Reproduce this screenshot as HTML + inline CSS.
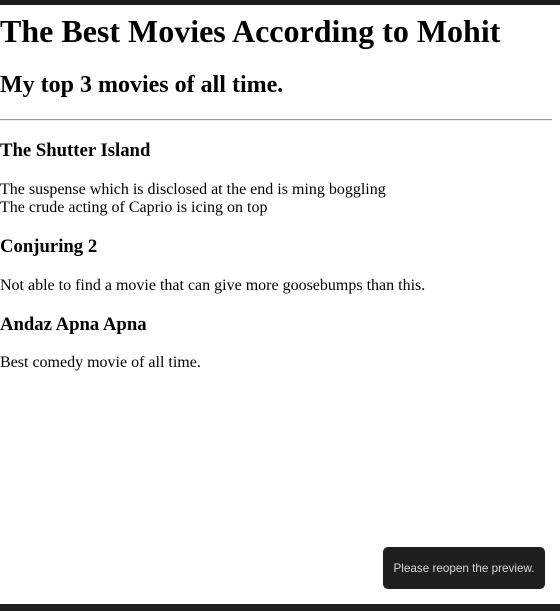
<!DOCTYPE html>
<html><head><meta charset="utf-8"><style>
html,body{margin:0;padding:0;background:#fff;}
body{width:552px;height:611px;overflow:hidden;position:relative;font-family:"Liberation Serif",serif;color:#000;padding-top:5px;box-sizing:border-box;}
.top{position:absolute;left:0;top:0;width:560px;height:5px;background:#1e1e1e;}
.bot{position:absolute;left:0;top:604px;width:560px;height:7px;background:#1e1e1e;}
h1{font-size:32px;margin:8px 0 0;line-height:normal;}
h2{font-size:24px;margin:21.9px 0 19.9px;line-height:normal;}
h3{font-size:18.72px;margin:19.2px 0 18.7px;line-height:normal;}
p{font-size:16px;margin:16px 0;line-height:normal;}
hr{margin:0;border:0;border-top:1px solid #9a9a9a;border-bottom:1px solid #eee;}
.toast{position:absolute;left:383px;top:547px;width:162px;height:42px;background:#1f1f1f;border-radius:5px;color:#d8d8d8;font-family:"Liberation Sans",sans-serif;font-size:11.7px;line-height:43px;text-align:center;}
</style></head><body>
<div class="top"></div>
<h1>The Best Movies According to Mohit</h1>
<h2>My top 3 movies of all time.</h2>
<hr>
<h3>The Shutter Island</h3>
<p>The suspense which is disclosed at the end is ming boggling<br>The crude acting of Caprio is icing on top</p>
<h3>Conjuring 2</h3>
<p>Not able to find a movie that can give more goosebumps than this.</p>
<h3>Andaz Apna Apna</h3>
<p>Best comedy movie of all time.</p>
<div class="toast">Please reopen the preview.</div>
<div class="bot"></div>
</body></html>
